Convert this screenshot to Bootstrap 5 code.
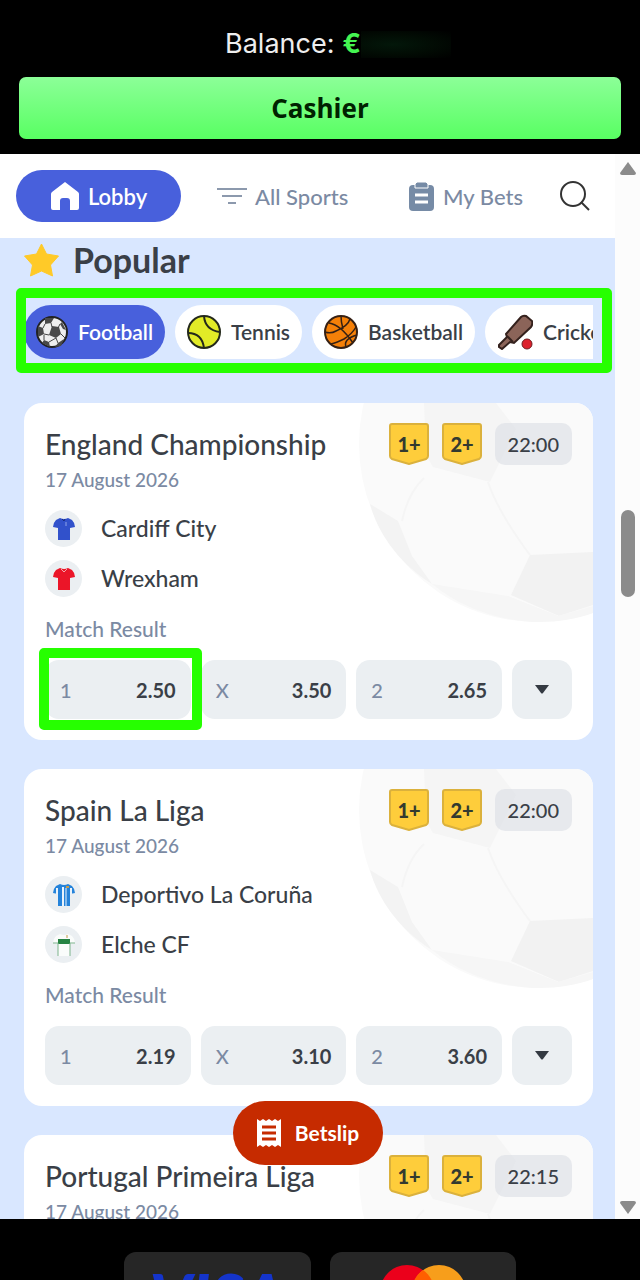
<!DOCTYPE html>
<html lang="en">
<head>
<meta charset="utf-8">
<meta name="viewport" content="width=device-width, initial-scale=1">
<title>Sports lobby</title>
<link href="https://cdn.jsdelivr.net/npm/bootstrap@5.3.0/dist/css/bootstrap.min.css" rel="stylesheet">
<style>
  :root { --ink: #3a3f47; --muted-ink: #7b8aa3; --brand: #4860dc; --mark-green: #26ff00; }
  body { font-family: Lato, "Open Sans", sans-serif; color: var(--ink); background: #000; font-weight: 500; }
  a { color: inherit; text-decoration: none; }
  button { font-family: inherit; }
  .top-bar { padding: 24px 19px 15px; }
  .balance { font: 400 27px/40px Inter, sans-serif; color: #eee; margin-bottom: 13px; }
  .balance b { color: #45f552; font-size: 27px; margin-left: 8px; }
  .veil { width: 90px; height: 27px; margin-right: -36px; background: radial-gradient(ellipse at 35% 50%, #03170a, #020c04 50%, #000 100%); }
  .cashier { height: 62px; border: 0; border-radius: 7px; background: linear-gradient(#8cff98, #58ff62); font: 700 26px/32px "Open Sans", sans-serif; color: #020; }
  .stage { min-height: 0; background: #fcfcfc; }
  .lobby { background: #d9e7ff; min-width: 0; }
  .scroll-rail { width: 25px; padding: 8px 5px 5px; }
  .scroll-thumb { width: 14px; height: 87px; border-radius: 7px; background: #8b8b8b; margin-top: 335px; }
  .tabs { height: 84px; padding: 0 24px 0 16px; background: #fff; font-size: 22px; color: var(--muted-ink); }
  .tab-on { width: 165px; height: 52px; border-radius: 26px; background: var(--brand); color: #fff; font-weight: 600; }
  .tab-rest { padding: 0 36px; }
  .search { border: 0; background: none; padding: 0; line-height: 0; }
  .feed { padding: 0 22px 0 24px; }
  .popular { font-size: 34px; line-height: 44px; font-weight: 700; gap: 14px; }
  .sports { margin: 23px 0 44px; }
  .sport-row, .odds { gap: 10px; }
  .sport { height: 54px; border-radius: 27px; border: 0; background: #fff; padding: 0 12px; gap: 10px; font-size: 21px; font-weight: 600; color: var(--ink); flex: none; }
  .sport.on { background: var(--brand); color: #fff; }
  .mark-box { position: absolute; border: 10px solid var(--mark-green); border-radius: 5px; pointer-events: none; }
  .mark-sports { inset: -17px -19px -14px -8px; }
  .mark-odd { inset: -12px -11px -11px -6px; }
  .match { border-radius: 18px; background: #fff; padding: 20px 21px; margin-bottom: 29px; overflow: hidden; position: relative; height: 337px; }
  .ball-ghost { position: absolute; top: 0; right: 0; }
  .league { font-size: 28px; line-height: 42px; font-weight: 500; }
  .day { font-size: 19px; line-height: 30px; color: var(--muted-ink); }
  .badges { gap: 13px; }
  .shield { width: 40px; height: 42px; }
  .shield text { font: 900 20px Lato, sans-serif; fill: #333a30; }
  .kickoff { height: 42px; line-height: 42px; border-radius: 10px; padding: 0 13px; background: rgba(218, 222, 228, .6); font-size: 20px; }
  .teams { margin: 15px 0 17px; gap: 13px; }
  .team { font-size: 23px; line-height: 37px; gap: 19px; }
  .kit { width: 37px; height: 37px; border-radius: 50%; background: #ebeff2; }
  .market { font-size: 21px; line-height: 30px; color: var(--muted-ink); margin-bottom: 16px; }
  .evenly { flex: 1 1 0; min-width: 0; }
  .odd { height: 59px; border: 0; border-radius: 14px; background: #ebeff2; padding: 0 15px; font-size: 20px; font-weight: 700; color: var(--ink); width: 100%; }
  .odd span:first-child { color: var(--muted-ink); font-weight: 500; }
  .more { width: 60px; flex: none; }
  .betslip { position: absolute; bottom: 54px; left: 50%; transform: translateX(-50%); width: 150px; height: 64px; border: 0; border-radius: 32px; background: #c62b00; color: #fff; font-size: 21px; font-weight: 700; gap: 13px; z-index: 3; }
  .payments { height: 61px; padding: 33px 124px 0; gap: 19px; overflow: hidden; }
  .pay { height: 110px; border-radius: 12px; background: #262626; overflow: hidden; }
  .visa { font: italic 900 64px/90px Lato, sans-serif; color: #1434cb; }
</style>
</head>
<body class="d-flex flex-column vh-100 overflow-hidden">
<svg class="d-none">
  <symbol id="ghost" viewBox="0 0 235 220">
    <circle cx="179" cy="41" r="178" fill="#fafafa"/>
    <path d="M66 0h72l20 26-26 53-57-15-7-12z" fill="#f5f5f5"/>
    <path d="M12 101l28 17 14 35 20 28C42 161 20 131 12 101Z" fill="#f3f3f3"/>
    <path d="M172 152l63-3v53l-34 11-48-21z" fill="#f2f2f2"/>
    <path d="M74 181l76 12 50 20 35-10v7c-55 20-120 5-161-29Z" fill="#f6f6f6"/>
    <path d="M66 75Q50 90 44 118M130 79q10 30 42 73" fill="none" stroke="#f5f5f5" stroke-width="2"/>
  </symbol>
  <symbol id="shield-shape" viewBox="0 0 40 42">
    <path d="M3 1h34q2 0 2 2v30q0 2-2 3L20 41 3 36q-2-1-2-3V3q0-2 2-2Z" fill="#fecd3b" stroke="#dbb13c" stroke-width="2"/>
  </symbol>
  <symbol id="shirt" viewBox="0 0 22 23">
    <path d="M7 1q4 2 8 0l4 2q3 3 3 7l-5 1v12H5V11l-5-1q0-4 3-7Z"/>
  </symbol>
  <symbol id="caret" viewBox="0 0 14 9"><path d="M0 0h14L8 8q-1 1-2 0Z" fill="#343a42"/></symbol>
</svg>

<header class="top-bar text-center">
  <div class="balance d-flex justify-content-center align-items-center"><span>Balance:</span><b>€</b><span class="veil"></span></div>
  <button class="cashier w-100 d-block">Cashier</button>
</header>

<div class="stage d-flex flex-grow-1 overflow-hidden">
  <main class="lobby flex-grow-1 position-relative overflow-hidden">
    <nav class="tabs d-flex align-items-center">
      <a href="#" class="tab-on d-flex align-items-center justify-content-center gap-2">
        <svg width="30" height="30" viewBox="0 0 30 30"><path d="M15 1L28 11q1 1 1 2v14q0 2-2 2h-7v-9q0-3-3-3h-4q-3 0-3 3v9H3q-2 0-2-2V13q0-1 1-2Z" fill="#fff"/></svg>Lobby</a>
      <div class="tab-rest d-flex flex-grow-1 justify-content-between">
        <a href="#" class="d-flex align-items-center gap-2">
          <svg width="30" height="18" viewBox="0 0 30 18" stroke="#8c99ad" stroke-width="2" fill="none"><path d="M0 2h30M5 9h20M11 16h8"/></svg>All Sports</a>
        <a href="#" class="d-flex align-items-center gap-2">
          <svg width="27" height="30" viewBox="0 0 27 30"><rect x="1" y="4" width="25" height="26" rx="4" fill="#768ba6"/><path d="M9 1h9l2 2v4H7V3Z" fill="#768ba6" stroke="#fff"/><path d="M7 14h13M7 21h13" stroke="#fff" stroke-width="3"/></svg>My Bets</a>
      </div>
      <button class="search" aria-label="Search"><svg width="32" height="32" viewBox="0 0 32 32" fill="none" stroke="#333" stroke-width="2"><circle cx="14" cy="14" r="12"/><path d="M22 22l8 8"/></svg></button>
    </nav>

    <div class="feed">
      <h1 class="popular d-flex align-items-center mb-0">
        <svg width="35" height="34" viewBox="0 0 35 34"><path d="M17.500 1l5 10 12 2-8 9 2 11-11-5-11 5 2-11-8-9 12-2Z" fill="#ffca28" stroke="#ffca28" stroke-linejoin="round"/></svg>Popular</h1>

      <div class="sports position-relative">
        <div class="sport-row d-flex overflow-hidden">
          <button class="sport on d-flex align-items-center">
            <svg width="32" height="32" viewBox="0 0 32 32"><circle cx="16" cy="16" r="15" fill="#eee" stroke="#222" stroke-width="2"/><path d="M16 10l7 1 2 7-5 4-7-3zM9 2l9 0-3 5-6 1zM26 6l4 8-3-1-3-5zM2 10l5 2 1 6-6 3zM8 24l5 2 1 5-8-4zM22 27l6-4-3 7-6 1z" fill="#494949"/><path d="M15 7l1 4M9 8l-2 4M24 8l-2 4M8 18l5 1M8 19v5M13 26l7-4M20 22l2 5M25 18l4 4" stroke="#444" fill="none"/></svg>Football</button>
          <button class="sport d-flex align-items-center">
            <svg width="34" height="34" viewBox="0 0 34 34"><circle cx="17" cy="17" r="16" fill="#e2eb27" stroke="#24291b" stroke-width="2"/><path d="M17 1q1 14 16 16M1 18q14 0 16 15" fill="none" stroke="#24291b" stroke-width="2"/></svg>Tennis</button>
          <button class="sport d-flex align-items-center">
            <svg width="34" height="34" viewBox="0 0 34 34" fill="none" stroke="#352014" stroke-width="2"><circle cx="17" cy="17" r="16" fill="#f58008"/><path stroke-width="1.500" d="M5 8q12 2 24 20M17 1q0 6 2 13M26 4q-2 7-14 12Q7 19 1 17M32 12q-4 7-12 12-8 4-13 5M22 32q-3-8 11-12"/></svg>Basketball</button>
          <button class="sport d-flex align-items-center">
            <svg width="36" height="36" viewBox="0 0 36 36" stroke="#34211d" stroke-width="2"><path d="M2 31l8-8-1-3L24 3q2-2 5-1l6 5q1 3-1 6L17 29l-4-1-8 7-3-2Z" fill="#8b6459"/><path d="M10 22l6 6" fill="none"/><circle cx="30" cy="30" r="5" fill="#dc202c" stroke="#6d1d20" stroke-width="1"/></svg>Cricket</button>
        </div>
        <div class="mark-box mark-sports"></div>
      </div>

      <article class="match">
        <svg class="ball-ghost" width="235" height="220"><use href="#ghost"/></svg>
        <div class="position-relative">
          <div class="d-flex justify-content-between"><h2 class="league mb-0">England Championship</h2>
            <div class="d-flex badges"><svg class="shield"><use href="#shield-shape"/><text x="20" y="29" text-anchor="middle">1+</text></svg><svg class="shield"><use href="#shield-shape"/><text x="20" y="29" text-anchor="middle">2+</text></svg><time class="kickoff">22:00</time></div></div>
          <div class="day">17 August 2026</div>
          <div class="teams d-flex flex-column">
            <div class="team d-flex"><span class="kit d-flex align-items-center justify-content-center"><svg width="22" height="23"><use href="#shirt" fill="#3151cb"/><path d="M9 2l2 2 1-2" stroke="#172a80" fill="none"/><path d="M13 5v4" stroke="#8fa3e8"/></svg></span>Cardiff City</div>
            <div class="team d-flex"><span class="kit d-flex align-items-center justify-content-center"><svg width="22" height="23"><use href="#shirt" fill="#eb1528"/><path d="M8 2l3 3 3-3" fill="none" stroke="#f4a4a9"/></svg></span>Wrexham</div>
          </div>
          <div class="market">Match Result</div>
          <div class="d-flex odds">
            <div class="position-relative evenly"><button class="odd d-flex align-items-center justify-content-between"><span>1</span><span>2.50</span></button><div class="mark-box mark-odd"></div></div>
            <div class="evenly"><button class="odd d-flex align-items-center justify-content-between"><span>X</span><span>3.50</span></button></div>
            <div class="evenly"><button class="odd d-flex align-items-center justify-content-between"><span>2</span><span>2.65</span></button></div>
            <button class="odd more d-flex align-items-center justify-content-center" aria-label="More odds"><svg width="14" height="9"><use href="#caret"/></svg></button>
          </div>
        </div>
      </article>

      <article class="match">
        <svg class="ball-ghost" width="235" height="220"><use href="#ghost"/></svg>
        <div class="position-relative">
          <div class="d-flex justify-content-between"><h2 class="league mb-0">Spain La Liga</h2>
            <div class="d-flex badges"><svg class="shield"><use href="#shield-shape"/><text x="20" y="29" text-anchor="middle">1+</text></svg><svg class="shield"><use href="#shield-shape"/><text x="20" y="29" text-anchor="middle">2+</text></svg><time class="kickoff">22:00</time></div></div>
          <div class="day">17 August 2026</div>
          <div class="teams d-flex flex-column">
            <div class="team d-flex"><span class="kit d-flex align-items-center justify-content-center"><svg width="22" height="23"><use href="#shirt" fill="#2583da"/><path d="M4 5v6M10 4v19M18 5v6" stroke="#e9f3fc" stroke-width="2"/><path d="M13 5v18" stroke="#e9f3fc"/><path d="M13 4h3" stroke="#c69b4b" stroke-width="2"/></svg></span>Deportivo La Coruña</div>
            <div class="team d-flex"><span class="kit d-flex align-items-center justify-content-center"><svg width="22" height="23"><use href="#shirt" fill="#fafcfb"/><path d="M5 6h12v5H5Z" fill="#258342"/><path d="M0 10h5v13M22 10h-5v13" fill="none" stroke="#7cb38c"/><path d="M14 2v3" stroke="#c69b4b"/></svg></span>Elche CF</div>
          </div>
          <div class="market">Match Result</div>
          <div class="d-flex odds">
            <div class="evenly"><button class="odd d-flex align-items-center justify-content-between"><span>1</span><span>2.19</span></button></div>
            <div class="evenly"><button class="odd d-flex align-items-center justify-content-between"><span>X</span><span>3.10</span></button></div>
            <div class="evenly"><button class="odd d-flex align-items-center justify-content-between"><span>2</span><span>3.60</span></button></div>
            <button class="odd more d-flex align-items-center justify-content-center" aria-label="More odds"><svg width="14" height="9"><use href="#caret"/></svg></button>
          </div>
        </div>
      </article>

      <article class="match">
        <svg class="ball-ghost" width="235" height="220"><use href="#ghost"/></svg>
        <div class="position-relative">
          <div class="d-flex justify-content-between"><h2 class="league mb-0">Portugal Primeira Liga</h2>
            <div class="d-flex badges"><svg class="shield"><use href="#shield-shape"/><text x="20" y="29" text-anchor="middle">1+</text></svg><svg class="shield"><use href="#shield-shape"/><text x="20" y="29" text-anchor="middle">2+</text></svg><time class="kickoff">22:15</time></div></div>
          <div class="day">17 August 2026</div>
        </div>
      </article>
    </div>

    <button class="betslip d-flex align-items-center justify-content-center p-0"><svg width="26" height="28" viewBox="0 0 26 28"><path d="M1 0l3 2 3-2 3 2 3-2 3 2 3-2 3 2 3-2v28l-3-2-3 2-3-2-3 2-3-2-3 2-3-2-3 2Z" fill="#fff"/><path d="M6 8h14M6 14h14M6 20h14" stroke="#c62b00" stroke-width="3"/></svg>Betslip</button>
  </main>
  <div class="scroll-rail d-flex flex-column align-items-center">
    <svg width="16" height="13" viewBox="0 0 16 13"><path d="M8 0l8 11q0 2-2 2H2q-2 0-2-2Z" fill="#8b8b8b"/></svg>
    <div class="scroll-thumb"></div>
    <svg class="mt-auto" width="16" height="13" viewBox="0 0 16 13"><path d="M8 13l8-11q0-2-2-2H2Q0 0 0 2Z" fill="#8b8b8b"/></svg>
  </div>
</div>

<footer class="payments d-flex flex-shrink-0">
  <div class="pay evenly text-center visa">VISA</div>
  <div class="pay evenly d-flex justify-content-center align-items-start pt-1"><svg width="86" height="88" viewBox="0 -8 86 88"><circle cx="27" cy="28" r="27" fill="#eb001b"/><circle cx="59" cy="28" r="27" fill="#f79e1b"/><path d="M43 6a27 27 0 0 1 0 44 27 27 0 0 1 0-44Z" fill="#ff5f00"/></svg></div>
</footer>
<script src="https://cdn.jsdelivr.net/npm/bootstrap@5.3.0/dist/js/bootstrap.bundle.min.js"></script>
</body>
</html>
